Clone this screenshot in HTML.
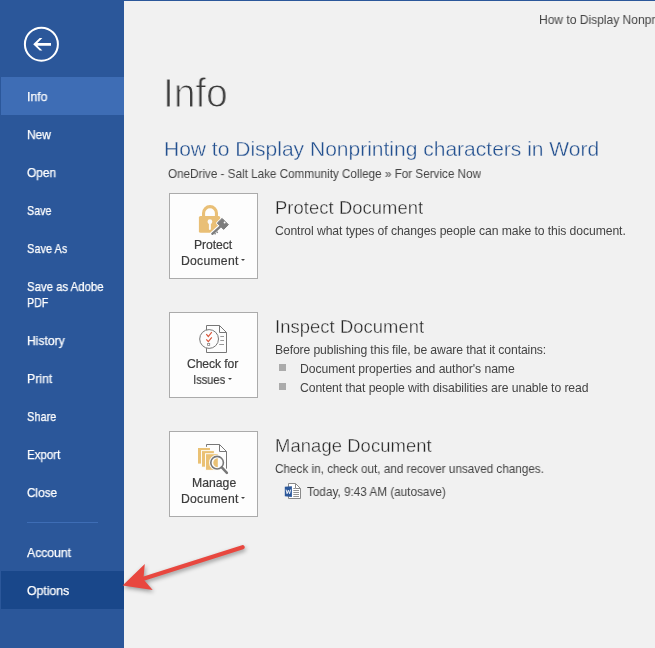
<!DOCTYPE html>
<html lang="en">
<head>
<meta charset="utf-8">
<title>Info - Word Backstage</title>
<style>
html,body{margin:0;padding:0;}
body{width:655px;height:648px;overflow:hidden;background:#f1f1f1;font-family:"Liberation Sans",sans-serif;}
#app{position:relative;width:655px;height:648px;overflow:hidden;background:#f1f1f1;}
#topline{position:absolute;left:0;top:0;width:655px;height:1px;background:#2b579a;}
#side{position:absolute;left:0;top:0;width:124px;height:648px;background:#2b579a;}
.hl{position:absolute;left:1px;width:123px;height:38px;}
.hl.sel{top:77px;background:#3e6db5;}
.hl.hov{top:571px;background:#19478a;}
.sep{position:absolute;left:27px;top:522px;width:71px;height:1px;background:#3e6db5;}
.t{position:absolute;margin:0;padding:0;white-space:nowrap;line-height:normal;font-weight:400;color:#444;text-decoration:none;transform-origin:0 50%;will-change:transform;}
.mi{color:#fff;-webkit-text-stroke:0.25px #fff;}
.bl{color:#3c3c3c;-webkit-text-stroke:0.2px #3c3c3c;}
.btn{position:absolute;left:169px;width:87px;height:84px;border:1px solid #ababab;background:#fdfdfd;}
.bul{position:absolute;left:279px;width:7px;height:7px;background:#ababab;}
svg{position:absolute;overflow:visible;}
.dd{position:absolute;width:0;height:0;border-left:2.8px solid transparent;border-right:2.8px solid transparent;border-top:2.8px solid #444;}
</style>
</head>
<body>
<div id="app">
  <div id="topline"></div>
  <nav id="side">
    <svg width="40" height="40" style="left:22px;top:25px" viewBox="22 25 40 40">
      <circle cx="41.4" cy="44.2" r="16.5" fill="none" stroke="#fff" stroke-width="2"/>
      <path d="M33.2 44.3L39.7 38.1H42.4L37.4 42.9H51V45.75H37.45L42.4 50.5H39.7Z" fill="#fff"/>
    </svg>
    <div class="hl sel"></div>
    <div class="hl hov"></div>
    <a class="t mi" style="left:26.69px;top:90px;font-size:12.6px;transform:scaleX(0.972);">Info</a>
    <a class="t mi" style="left:26.64px;top:128px;font-size:12.6px;transform:scaleX(0.95);">New</a>
    <a class="t mi" style="left:26.75px;top:166px;font-size:12.6px;transform:scaleX(0.9474);">Open</a>
    <a class="t mi" style="left:27.15px;top:204px;font-size:12.6px;transform:scaleX(0.8471);">Save</a>
    <a class="t mi" style="left:27.13px;top:242px;font-size:12.6px;transform:scaleX(0.8715);">Save As</a>
    <a class="t mi" style="left:27.10px;top:280px;font-size:12.6px;transform:scaleX(0.9031);">Save as Adobe</a>
    <a class="t mi" style="left:26.73px;top:296px;font-size:12.6px;transform:scaleX(0.8456);">PDF</a>
    <a class="t mi" style="left:26.63px;top:334px;font-size:12.6px;transform:scaleX(0.9595);">History</a>
    <a class="t mi" style="left:26.62px;top:372px;font-size:12.6px;transform:scaleX(0.972);">Print</a>
    <a class="t mi" style="left:27.13px;top:410px;font-size:12.6px;transform:scaleX(0.873);">Share</a>
    <a class="t mi" style="left:26.67px;top:448px;font-size:12.6px;transform:scaleX(0.9114);">Export</a>
    <a class="t mi" style="left:26.63px;top:486px;font-size:12.6px;transform:scaleX(0.9321);">Close</a>
    <div class="sep"></div>
    <a class="t mi" style="left:27.31px;top:546px;font-size:12.6px;transform:scaleX(0.9657);">Account</a>
    <a class="t mi" style="left:26.73px;top:584px;font-size:12.6px;transform:scaleX(0.9752);">Options</a>
  </nav>
  <main>
    <div class="t" style="left:538.92px;top:13px;font-size:12.4px;transform:scaleX(0.9707);">How to Display Nonprinting characters in Word</div>
    <h1 class="t" style="left:162.62px;top:71px;font-size:40.3px;color:#3a3a3a;transform:scaleX(0.9629);-webkit-text-stroke:1.1px #f1f1f1;">Info</h1>
    <h2 class="t" style="left:164.18px;top:137px;font-size:21.0px;color:#23508f;letter-spacing:0.005px;-webkit-text-stroke:0.35px #f1f1f1;">How to Display Nonprinting characters in Word</h2>
    <p class="t" style="left:167.85px;top:167px;font-size:12.2px;transform:scaleX(0.9586);">OneDrive - Salt Lake Community College » For Service Now</p>

    <div class="btn" style="top:193px"></div>
    <svg width="40" height="36" style="left:194px;top:202px" viewBox="194 202 40 36">
      <path d="M203.55 217.5V213.1a6.45 6.45 0 0 1 12.9 0V217.5" fill="none" stroke="#e9bf76" stroke-width="3.1"/>
      <rect x="198.9" y="216" width="21.3" height="16.8" rx="1.6" fill="#e9bf76"/>
      <circle cx="209.9" cy="221.7" r="2.4" fill="#fbfbfb"/>
      <rect x="208.9" y="222" width="2" height="8" rx="1" fill="#fbfbfb"/>
      <g stroke="#fdfdfd" stroke-width="2.4" stroke-linejoin="round" fill="#fdfdfd">
        <path d="M222.1 218.4L228.4 224.7L223.6 229.4L217.3 223.1Z"/>
        <path d="M219.6 227.1L212.2 233.9" stroke-width="4.6" stroke-linecap="round"/>
        <path d="M221 226.5L221.2 233.4L214 234.2Z" stroke-width="1"/>
      </g>
      <path d="M222.1 218.4L228.4 224.7L223.6 229.4L217.3 223.1Z" fill="#7d7d7d" stroke="#7d7d7d" stroke-width="1" stroke-linejoin="round"/>
      <path d="M220 226.8L212.3 233.8" stroke="#7d7d7d" stroke-width="2.3" stroke-linecap="round" fill="none"/>
      <path d="M216.6 231.6l1.1 1.2M214.6 233.2l1 1.1" stroke="#7d7d7d" stroke-width="1.4" fill="none"/>
      <circle cx="224.6" cy="222.5" r="0.95" fill="#fdfdfd"/>
    </svg>
    <span class="t bl" style="left:193.89px;top:238px;font-size:12.2px;letter-spacing:-0.092px;">Protect</span>
    <span class="t bl" style="left:180.69px;top:254px;font-size:12.2px;letter-spacing:0.25px;">Document</span>
    <i class="dd" style="left:240.5px;top:259px"></i>
    <h3 class="t" style="left:274.76px;top:197px;font-size:18.4px;color:#262626;letter-spacing:0.067px;-webkit-text-stroke:0.35px #f1f1f1;">Protect Document</h3>
    <p class="t" style="left:275.19px;top:224px;font-size:12.2px;letter-spacing:-0.09px;">Control what types of changes people can make to this document.</p>

    <div class="btn" style="top:312px"></div>
    <svg width="40" height="36" style="left:194px;top:322px" viewBox="194 322 40 36">
      <path d="M206.5 325.5H219.5L226.5 332.5V352.5H206.5Z" fill="#fdfdfd" stroke="#777" stroke-width="1"/>
      <path d="M219.5 325.5V332.5H226.5" fill="none" stroke="#777" stroke-width="1"/>
      <path d="M220.3 336.5H224M220.3 340.5H224M219.2 344.5H224" stroke="#8c8c8c" stroke-width="0.9" fill="none"/>
      <circle cx="209.1" cy="339" r="9.4" fill="#fdfdfd" stroke="#777" stroke-width="1"/>
      <path d="M206.3 334.2L208.3 336.5L211.8 332.2M206.3 339.3L208.3 341.6L211.8 337.3" fill="none" stroke="#d8553a" stroke-width="1.15"/>
      <rect x="207.6" y="343.4" width="2.1" height="2.1" fill="#fff" stroke="#888" stroke-width="0.8"/>
    </svg>
    <span class="t bl" style="left:186.99px;top:357px;font-size:12.2px;letter-spacing:-0.12px;">Check for</span>
    <span class="t bl" style="left:192.65px;top:373px;font-size:12.2px;transform:scaleX(0.9132);">Issues</span>
    <i class="dd" style="left:227.6px;top:378px"></i>
    <h3 class="t" style="left:274.79px;top:316px;font-size:18.4px;color:#262626;letter-spacing:0.059px;-webkit-text-stroke:0.35px #f1f1f1;">Inspect Document</h3>
    <p class="t" style="left:275.39px;top:343px;font-size:12.2px;letter-spacing:-0.122px;">Before publishing this file, be aware that it contains:</p>
    <div class="bul" style="top:364px"></div>
    <p class="t" style="left:299.79px;top:362px;font-size:12.2px;letter-spacing:-0.066px;">Document properties and author's name</p>
    <div class="bul" style="top:383px"></div>
    <p class="t" style="left:299.89px;top:381px;font-size:12.2px;letter-spacing:-0.088px;">Content that people with disabilities are unable to read</p>

    <div class="btn" style="top:431px"></div>
    <svg width="40" height="36" style="left:194px;top:440px" viewBox="194 440 40 36">
      <path d="M206.5 444.5H219.5L226.5 451.5V469H206.5Z" fill="#fdfdfd"/>
      <path d="M206.5 446.8V444.5H219.5L226.5 451.5V468.7" fill="none" stroke="#777" stroke-width="1"/>
      <path d="M219.5 444.5V451.5H226.5" fill="none" stroke="#777" stroke-width="1"/>
      <rect x="198" y="448" width="12" height="15.6" fill="#eac174"/>
      <rect x="201" y="450.1" width="13.9" height="17.6" fill="#fdfbf6"/>
      <rect x="202" y="451.1" width="11.9" height="15.6" fill="#eac174"/>
      <rect x="205" y="453.2" width="13.8" height="17.6" fill="#fdfbf6"/>
      <rect x="206" y="454.2" width="11.8" height="15.6" fill="#eac174"/>
      <path d="M221.6 467.2L227 472.9" stroke="#fdfdfd" stroke-width="4.4" stroke-linecap="round"/>
      <circle cx="217.1" cy="462.7" r="8" fill="#fdfdfd"/>
      <circle cx="217.1" cy="462.7" r="6.3" fill="#fdfdfd" stroke="#777" stroke-width="1.6"/>
      <path d="M217.8 458.3A4.5 4.5 0 0 0 217.8 467.3Z" fill="#eac174"/>
      <path d="M221.8 467.4L226.9 472.8" stroke="#777" stroke-width="2.5" stroke-linecap="round"/>
    </svg>
    <span class="t bl" style="left:191.69px;top:476px;font-size:12.2px;letter-spacing:0.026px;">Manage</span>
    <span class="t bl" style="left:180.69px;top:492px;font-size:12.2px;letter-spacing:0.25px;">Document</span>
    <i class="dd" style="left:240.5px;top:497px"></i>
    <h3 class="t" style="left:274.96px;top:435px;font-size:18.4px;color:#262626;letter-spacing:0.093px;-webkit-text-stroke:0.35px #f1f1f1;">Manage Document</h3>
    <p class="t" style="left:275.22px;top:462px;font-size:12.2px;transform:scaleX(0.9612);">Check in, check out, and recover unsaved changes.</p>
    <svg width="20" height="20" style="left:283px;top:481px" viewBox="283 481 20 20">
      <path d="M288.5 483.5H295.5L300.5 488.5V498.5H288.5Z" fill="#fff" stroke="#8a8a8a" stroke-width="1"/>
      <path d="M295.5 483.5V488.5H300.5" fill="none" stroke="#8a8a8a" stroke-width="1"/>
      <path d="M293.3 488.5H295M293.3 490.5H299M293.3 492.5H299M293.3 494.5H299M293.3 496.5H299" stroke="#888" stroke-width="0.9" fill="none"/>
      <path d="M284.8 486.8L291.9 486.2V496.9L284.8 496.3Z" fill="#2b579a"/>
      <path d="M286.1 489.6L287.1 493.7L288.35 490.2L289.6 493.7L290.6 489.6" fill="none" stroke="#fff" stroke-width="0.9" stroke-linejoin="round"/>
    </svg>
    <p class="t" style="left:307.37px;top:485px;font-size:12.2px;transform:scaleX(0.9632);">Today, 9:43 AM (autosave)</p>
  </main>
  <svg width="140" height="60" style="left:115px;top:540px;filter:drop-shadow(1.8px 2.2px 2px rgba(0,0,0,0.38))" viewBox="115 540 140 60">
    <path d="M242.6 547.2L144.2 578.4" stroke="#e8473f" stroke-width="4.2" stroke-linecap="round" fill="none"/>
    <path d="M122.6 585.4L144.8 563.9L143.4 579.2L152.7 590Z" fill="#e8473f"/>
  </svg>
</div>
</body>
</html>
